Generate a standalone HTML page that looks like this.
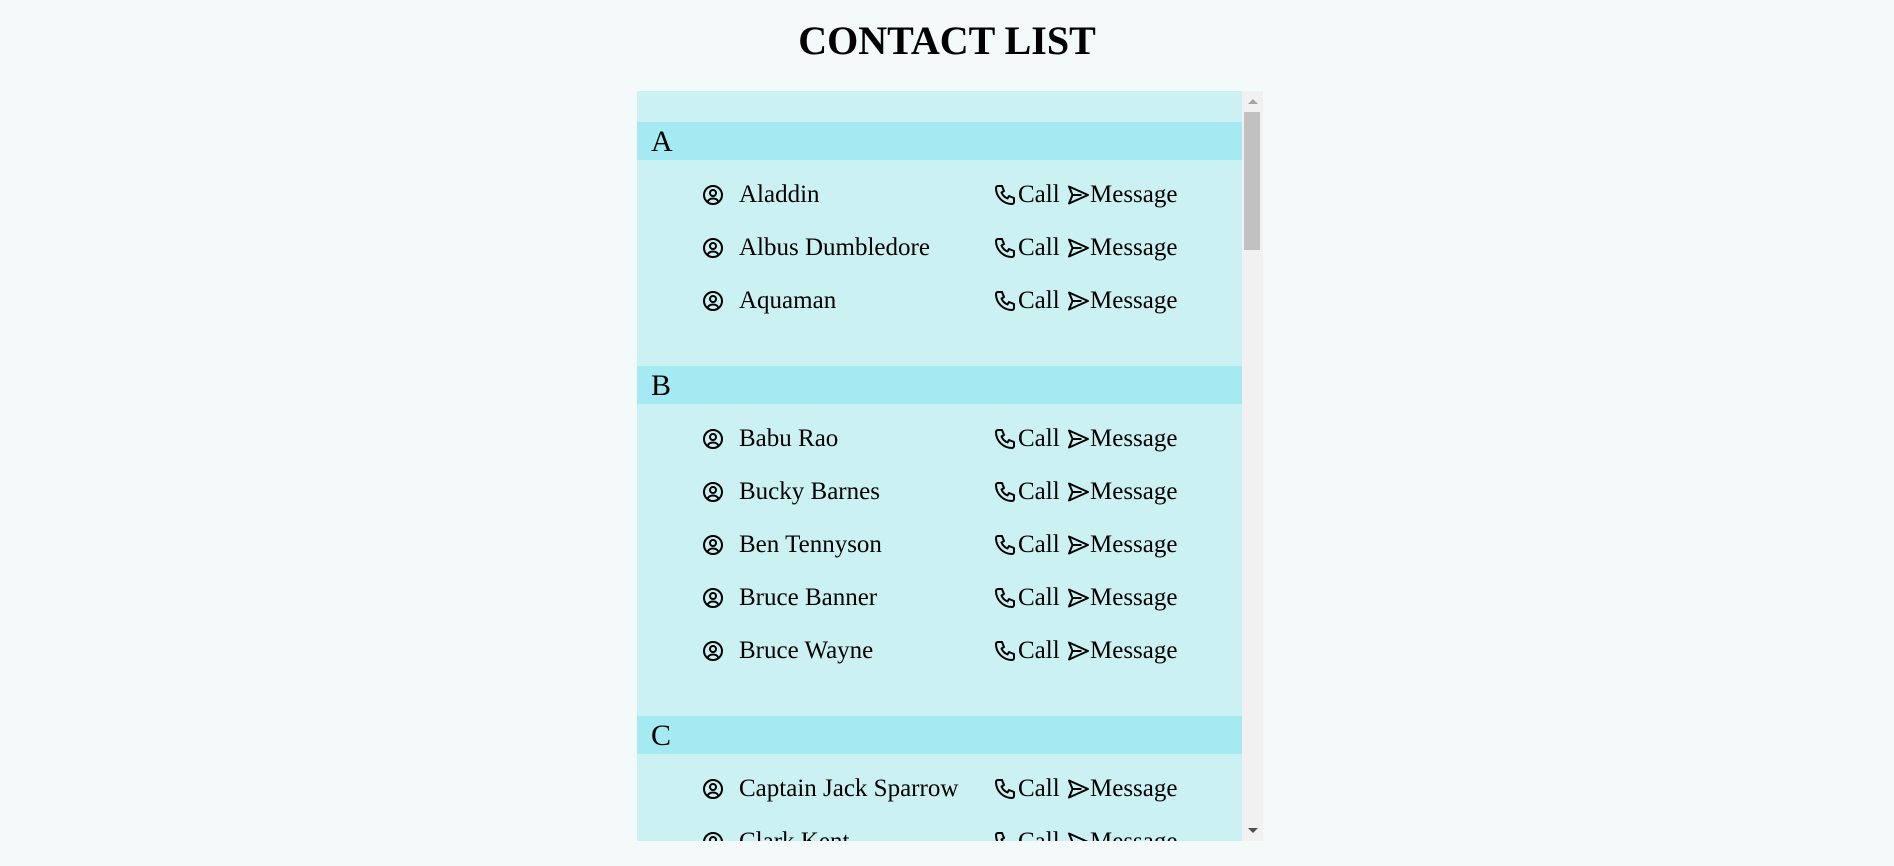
<!DOCTYPE html>
<html><head><style>
body{margin:0;background:#f4f9f9;font-family:"Liberation Serif",serif;width:1894px;height:866px;overflow:hidden;position:relative}
h1{position:absolute;top:1px;left:0;width:1894px;text-align:center;margin:0;font-size:40px;line-height:80px;font-weight:bold}
.box{position:absolute;left:637px;top:91px;width:605px;height:750px;background:#ccf1f2;overflow:hidden}
.sb{position:absolute;left:1242px;top:91px;width:21px;height:750px;background:#f1f1f1}
.thumb{position:absolute;left:2px;top:21px;width:16px;height:138px;background:#c1c1c1}
.up,.dn{position:absolute;left:6px;width:0;height:0;border-left:5px solid transparent;border-right:5px solid transparent}
.up{top:8px;border-bottom:5px solid #a3a3a3}
.dn{bottom:8px;border-top:5px solid #505050}
.inner{padding-top:31px}
.hd{height:38px;background:#a5eaf2;font-size:30px;line-height:40px;padding-left:14px}
ul{list-style:none;margin:0;padding:8px 0 39px 0}
li{height:53px;display:flex;align-items:center;font-size:25px;position:relative}
.u{position:absolute;left:64px;top:15px}
.n{position:absolute;left:102px}
.p{position:absolute;left:356px;top:15px}
.c{position:absolute;left:381px}
.s{position:absolute;left:429px;top:15px}
.m{position:absolute;left:453px}
</style></head><body>
<h1>CONTACT LIST</h1>
<div class="box"><div class="inner">
<div class="hd">A</div>
<ul>
<li><svg class="u" width="24" height="24" viewBox="0 0 24 24" fill="none" stroke="#000" stroke-width="2"><circle cx="12" cy="12" r="9"/><circle cx="12" cy="10" r="3"/><path d="M6.5 18.8c1-2.2 3-3.3 5.5-3.3s4.5 1.1 5.5 3.3"/></svg><span class="n">Aladdin</span><svg class="p" width="24" height="24" viewBox="0 0 24 24" fill="none" stroke="#000" stroke-width="2" stroke-linejoin="round"><path d="M5 3h4l2 5-2.5 1.5a11 11 0 0 0 6 6L16 13l5 2v4a2 2 0 0 1-2 2A16 16 0 0 1 3 5a2 2 0 0 1 2-2"/></svg><span class="c">Call</span><svg class="s" width="24" height="24" viewBox="0 0 24 24" fill="none" stroke="#000" stroke-width="2" stroke-linejoin="round"><path d="M3 3.5l19 8.5-19 8.5 3.5-8.5z M6.5 12h9"/></svg><span class="m">Message</span></li>
<li><svg class="u" width="24" height="24" viewBox="0 0 24 24" fill="none" stroke="#000" stroke-width="2"><circle cx="12" cy="12" r="9"/><circle cx="12" cy="10" r="3"/><path d="M6.5 18.8c1-2.2 3-3.3 5.5-3.3s4.5 1.1 5.5 3.3"/></svg><span class="n">Albus Dumbledore</span><svg class="p" width="24" height="24" viewBox="0 0 24 24" fill="none" stroke="#000" stroke-width="2" stroke-linejoin="round"><path d="M5 3h4l2 5-2.5 1.5a11 11 0 0 0 6 6L16 13l5 2v4a2 2 0 0 1-2 2A16 16 0 0 1 3 5a2 2 0 0 1 2-2"/></svg><span class="c">Call</span><svg class="s" width="24" height="24" viewBox="0 0 24 24" fill="none" stroke="#000" stroke-width="2" stroke-linejoin="round"><path d="M3 3.5l19 8.5-19 8.5 3.5-8.5z M6.5 12h9"/></svg><span class="m">Message</span></li>
<li><svg class="u" width="24" height="24" viewBox="0 0 24 24" fill="none" stroke="#000" stroke-width="2"><circle cx="12" cy="12" r="9"/><circle cx="12" cy="10" r="3"/><path d="M6.5 18.8c1-2.2 3-3.3 5.5-3.3s4.5 1.1 5.5 3.3"/></svg><span class="n">Aquaman</span><svg class="p" width="24" height="24" viewBox="0 0 24 24" fill="none" stroke="#000" stroke-width="2" stroke-linejoin="round"><path d="M5 3h4l2 5-2.5 1.5a11 11 0 0 0 6 6L16 13l5 2v4a2 2 0 0 1-2 2A16 16 0 0 1 3 5a2 2 0 0 1 2-2"/></svg><span class="c">Call</span><svg class="s" width="24" height="24" viewBox="0 0 24 24" fill="none" stroke="#000" stroke-width="2" stroke-linejoin="round"><path d="M3 3.5l19 8.5-19 8.5 3.5-8.5z M6.5 12h9"/></svg><span class="m">Message</span></li>
</ul>
<div class="hd">B</div>
<ul>
<li><svg class="u" width="24" height="24" viewBox="0 0 24 24" fill="none" stroke="#000" stroke-width="2"><circle cx="12" cy="12" r="9"/><circle cx="12" cy="10" r="3"/><path d="M6.5 18.8c1-2.2 3-3.3 5.5-3.3s4.5 1.1 5.5 3.3"/></svg><span class="n">Babu Rao</span><svg class="p" width="24" height="24" viewBox="0 0 24 24" fill="none" stroke="#000" stroke-width="2" stroke-linejoin="round"><path d="M5 3h4l2 5-2.5 1.5a11 11 0 0 0 6 6L16 13l5 2v4a2 2 0 0 1-2 2A16 16 0 0 1 3 5a2 2 0 0 1 2-2"/></svg><span class="c">Call</span><svg class="s" width="24" height="24" viewBox="0 0 24 24" fill="none" stroke="#000" stroke-width="2" stroke-linejoin="round"><path d="M3 3.5l19 8.5-19 8.5 3.5-8.5z M6.5 12h9"/></svg><span class="m">Message</span></li>
<li><svg class="u" width="24" height="24" viewBox="0 0 24 24" fill="none" stroke="#000" stroke-width="2"><circle cx="12" cy="12" r="9"/><circle cx="12" cy="10" r="3"/><path d="M6.5 18.8c1-2.2 3-3.3 5.5-3.3s4.5 1.1 5.5 3.3"/></svg><span class="n">Bucky Barnes</span><svg class="p" width="24" height="24" viewBox="0 0 24 24" fill="none" stroke="#000" stroke-width="2" stroke-linejoin="round"><path d="M5 3h4l2 5-2.5 1.5a11 11 0 0 0 6 6L16 13l5 2v4a2 2 0 0 1-2 2A16 16 0 0 1 3 5a2 2 0 0 1 2-2"/></svg><span class="c">Call</span><svg class="s" width="24" height="24" viewBox="0 0 24 24" fill="none" stroke="#000" stroke-width="2" stroke-linejoin="round"><path d="M3 3.5l19 8.5-19 8.5 3.5-8.5z M6.5 12h9"/></svg><span class="m">Message</span></li>
<li><svg class="u" width="24" height="24" viewBox="0 0 24 24" fill="none" stroke="#000" stroke-width="2"><circle cx="12" cy="12" r="9"/><circle cx="12" cy="10" r="3"/><path d="M6.5 18.8c1-2.2 3-3.3 5.5-3.3s4.5 1.1 5.5 3.3"/></svg><span class="n">Ben Tennyson</span><svg class="p" width="24" height="24" viewBox="0 0 24 24" fill="none" stroke="#000" stroke-width="2" stroke-linejoin="round"><path d="M5 3h4l2 5-2.5 1.5a11 11 0 0 0 6 6L16 13l5 2v4a2 2 0 0 1-2 2A16 16 0 0 1 3 5a2 2 0 0 1 2-2"/></svg><span class="c">Call</span><svg class="s" width="24" height="24" viewBox="0 0 24 24" fill="none" stroke="#000" stroke-width="2" stroke-linejoin="round"><path d="M3 3.5l19 8.5-19 8.5 3.5-8.5z M6.5 12h9"/></svg><span class="m">Message</span></li>
<li><svg class="u" width="24" height="24" viewBox="0 0 24 24" fill="none" stroke="#000" stroke-width="2"><circle cx="12" cy="12" r="9"/><circle cx="12" cy="10" r="3"/><path d="M6.5 18.8c1-2.2 3-3.3 5.5-3.3s4.5 1.1 5.5 3.3"/></svg><span class="n">Bruce Banner</span><svg class="p" width="24" height="24" viewBox="0 0 24 24" fill="none" stroke="#000" stroke-width="2" stroke-linejoin="round"><path d="M5 3h4l2 5-2.5 1.5a11 11 0 0 0 6 6L16 13l5 2v4a2 2 0 0 1-2 2A16 16 0 0 1 3 5a2 2 0 0 1 2-2"/></svg><span class="c">Call</span><svg class="s" width="24" height="24" viewBox="0 0 24 24" fill="none" stroke="#000" stroke-width="2" stroke-linejoin="round"><path d="M3 3.5l19 8.5-19 8.5 3.5-8.5z M6.5 12h9"/></svg><span class="m">Message</span></li>
<li><svg class="u" width="24" height="24" viewBox="0 0 24 24" fill="none" stroke="#000" stroke-width="2"><circle cx="12" cy="12" r="9"/><circle cx="12" cy="10" r="3"/><path d="M6.5 18.8c1-2.2 3-3.3 5.5-3.3s4.5 1.1 5.5 3.3"/></svg><span class="n">Bruce Wayne</span><svg class="p" width="24" height="24" viewBox="0 0 24 24" fill="none" stroke="#000" stroke-width="2" stroke-linejoin="round"><path d="M5 3h4l2 5-2.5 1.5a11 11 0 0 0 6 6L16 13l5 2v4a2 2 0 0 1-2 2A16 16 0 0 1 3 5a2 2 0 0 1 2-2"/></svg><span class="c">Call</span><svg class="s" width="24" height="24" viewBox="0 0 24 24" fill="none" stroke="#000" stroke-width="2" stroke-linejoin="round"><path d="M3 3.5l19 8.5-19 8.5 3.5-8.5z M6.5 12h9"/></svg><span class="m">Message</span></li>
</ul>
<div class="hd">C</div>
<ul>
<li><svg class="u" width="24" height="24" viewBox="0 0 24 24" fill="none" stroke="#000" stroke-width="2"><circle cx="12" cy="12" r="9"/><circle cx="12" cy="10" r="3"/><path d="M6.5 18.8c1-2.2 3-3.3 5.5-3.3s4.5 1.1 5.5 3.3"/></svg><span class="n">Captain Jack Sparrow</span><svg class="p" width="24" height="24" viewBox="0 0 24 24" fill="none" stroke="#000" stroke-width="2" stroke-linejoin="round"><path d="M5 3h4l2 5-2.5 1.5a11 11 0 0 0 6 6L16 13l5 2v4a2 2 0 0 1-2 2A16 16 0 0 1 3 5a2 2 0 0 1 2-2"/></svg><span class="c">Call</span><svg class="s" width="24" height="24" viewBox="0 0 24 24" fill="none" stroke="#000" stroke-width="2" stroke-linejoin="round"><path d="M3 3.5l19 8.5-19 8.5 3.5-8.5z M6.5 12h9"/></svg><span class="m">Message</span></li>
<li><svg class="u" width="24" height="24" viewBox="0 0 24 24" fill="none" stroke="#000" stroke-width="2"><circle cx="12" cy="12" r="9"/><circle cx="12" cy="10" r="3"/><path d="M6.5 18.8c1-2.2 3-3.3 5.5-3.3s4.5 1.1 5.5 3.3"/></svg><span class="n">Clark Kent</span><svg class="p" width="24" height="24" viewBox="0 0 24 24" fill="none" stroke="#000" stroke-width="2" stroke-linejoin="round"><path d="M5 3h4l2 5-2.5 1.5a11 11 0 0 0 6 6L16 13l5 2v4a2 2 0 0 1-2 2A16 16 0 0 1 3 5a2 2 0 0 1 2-2"/></svg><span class="c">Call</span><svg class="s" width="24" height="24" viewBox="0 0 24 24" fill="none" stroke="#000" stroke-width="2" stroke-linejoin="round"><path d="M3 3.5l19 8.5-19 8.5 3.5-8.5z M6.5 12h9"/></svg><span class="m">Message</span></li>
</ul>
</div></div>
<div class="sb"><div class="up"></div><div class="thumb"></div><div class="dn"></div></div>
</body></html>
